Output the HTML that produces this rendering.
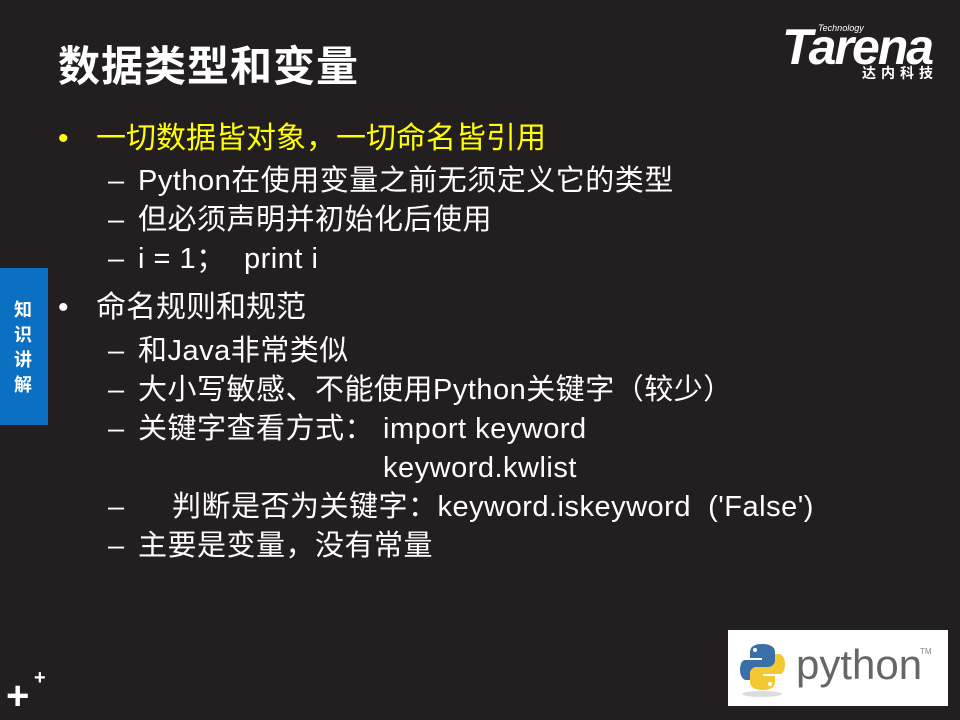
<!DOCTYPE html>
<html><head><meta charset="utf-8"><style>
body{margin:0;width:960px;height:720px;background:#231f20;position:relative;overflow:hidden;font-family:"Liberation Sans","Noto Sans CJK SC",sans-serif;color:#fff}
.a{position:absolute;white-space:pre;line-height:1}
.t{left:58px;top:46px;font-size:42px;font-weight:bold;letter-spacing:1px}
.b{font-size:30px}
.s{font-size:29px;letter-spacing:0.5px}
</style></head><body>
<div class="a t">数据类型和变量</div>
<div class="a b" style="left:58px;top:124px;color:#ffff00">•</div>
<div class="a b" style="left:96px;top:124px;color:#ffff00">一切数据皆对象，一切命名皆引用</div>
<div class="a s" style="left:108px;top:167px">–</div><div class="a s" style="left:138px;top:167px">Python在使用变量之前无须定义它的类型</div>
<div class="a s" style="left:108px;top:206px">–</div><div class="a s" style="left:138px;top:206px">但必须声明并初始化后使用</div>
<div class="a s" style="left:108px;top:245px">–</div><div class="a s" style="left:138px;top:245px">i = 1；</div><div class="a s" style="left:244px;top:245px">print i</div>
<div class="a b" style="left:58px;top:293px">•</div>
<div class="a b" style="left:96px;top:293px">命名规则和规范</div>
<div class="a s" style="left:108px;top:337px">–</div><div class="a s" style="left:138px;top:337px">和Java非常类似</div>
<div class="a s" style="left:108px;top:376px">–</div><div class="a s" style="left:138px;top:376px">大小写敏感、不能使用Python关键字（较少）</div>
<div class="a s" style="left:108px;top:415px">–</div><div class="a s" style="left:138px;top:415px">关键字查看方式：</div><div class="a s" style="left:383px;top:415px">import keyword</div>
<div class="a s" style="left:383px;top:454px">keyword.kwlist</div>
<div class="a s" style="left:108px;top:493px">–</div><div class="a s" style="left:172px;top:493px">判断是否为关键字：keyword.iskeyword  ('False')</div>
<div class="a s" style="left:108px;top:532px">–</div><div class="a s" style="left:138px;top:532px">主要是变量，没有常量</div>
<div class="a" style="left:782px;top:22px;font-size:50px;font-weight:bold;font-style:italic;letter-spacing:-2px">Tarena</div>
<div class="a" style="left:818px;top:24px;font-size:9px;font-style:italic">Technology</div>
<div class="a" style="left:862px;top:66px;font-size:14px;font-weight:bold;letter-spacing:5px">达内科技</div>
<div class="a" style="left:0;top:268px;width:48px;height:157px;background:#0b6fc2"></div>
<div class="a" style="left:14px;top:298px;font-size:18px;font-weight:bold;line-height:25px;white-space:normal;width:20px">知识讲解</div>
<div class="a" style="left:6px;top:676px;font-size:40px;font-weight:bold">+</div>
<div class="a" style="left:34px;top:668px;font-size:20px;font-weight:bold">+</div>
<div class="a" style="left:728px;top:630px;width:220px;height:76px;background:#fff"></div>
<svg class="a" style="left:740px;top:642px" width="50" height="56" viewBox="0 0 50 56">
<ellipse cx="22" cy="52" rx="20" ry="3" fill="#ddd"/>
<path d="M22 2c-8 0-12 3-12 8v6h12v2H5c-3 0-5 4-5 10s3 10 6 10h4v-6c0-4 3-7 7-7h11c4 0 7-3 7-6V10c0-5-5-8-13-8z" fill="#3a6fa8"/>
<path d="M23 48c8 0 12-3 12-8v-6H23v-2h17c3 0 5-4 5-10s-3-10-6-10h-4v6c0 4-3 7-7 7H17c-4 0-7 3-7 6v9c0 5 5 8 13 8z" fill="#f3c832"/>
<circle cx="15" cy="8" r="2" fill="#fff"/><circle cx="30" cy="42" r="2" fill="#fff"/>
</svg>
<div class="a" style="left:796px;top:644px;font-size:42px;color:#666">python</div>
<div class="a" style="left:920px;top:648px;font-size:8px;color:#888">TM</div>
</body></html>
